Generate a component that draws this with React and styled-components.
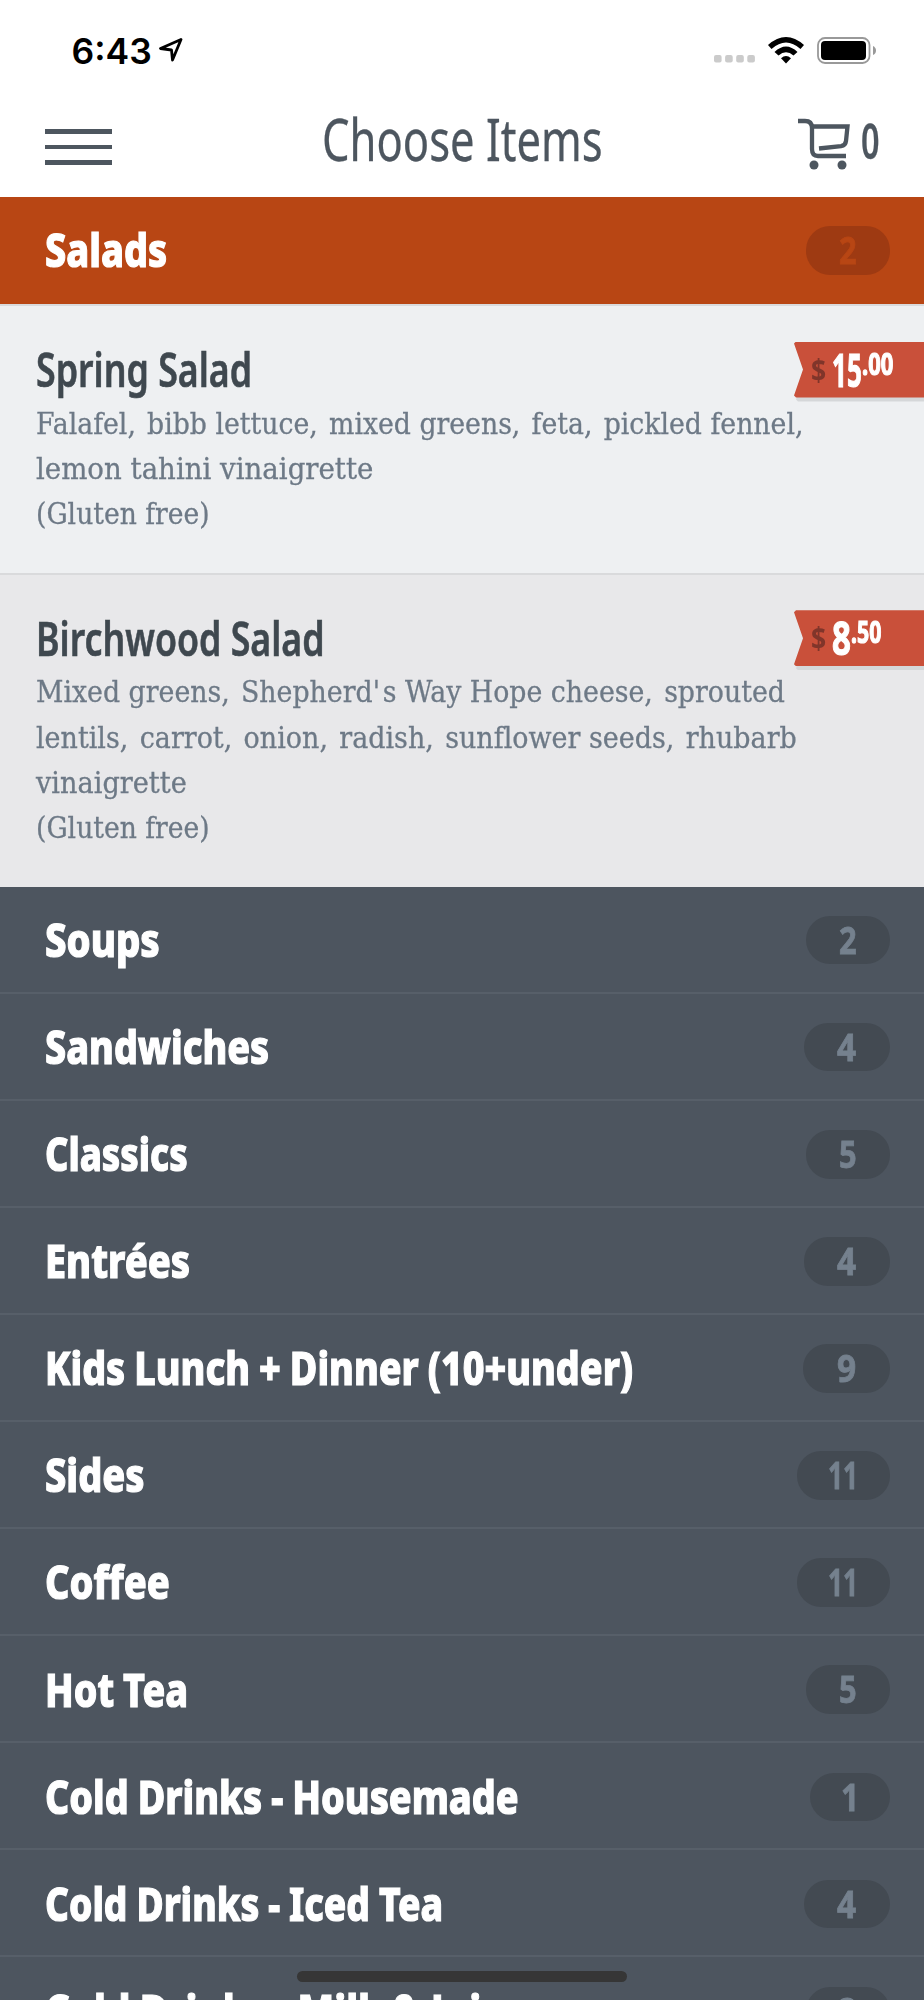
import React, { useLayoutEffect, useRef, useState } from "react";
import styled, { createGlobalStyle } from "styled-components";

const GlobalStyle = createGlobalStyle`
  * { box-sizing: border-box; }
  html, body { margin: 0; padding: 0; }
  body { background: #4d555f; overflow: hidden; }
`;

const sans = `"Noto Sans", "Open Sans", sans-serif`;

const Screen = styled.div`
  position: relative;
  width: 924px;
  height: 2000px;
  overflow: hidden;
  background: #4d555f;
  font-family: ${sans};
  font-variant-ligatures: none;
`;

const FitBox = styled.span`
  display: block;
  flex: none;
  width: ${(p) => p.$width}px;
  white-space: nowrap;
`;

const FitInner = styled.span`
  display: inline-block;
  transform-origin: 0 50%;
`;

/* Condenses a line of type so that it occupies exactly `width` pixels. */
function Fit({ width, children }) {
  const ref = useRef(null);
  const [scale, setScale] = useState(1);
  useLayoutEffect(() => {
    setScale(width / ref.current.offsetWidth);
  }, [width]);
  return (
    <FitBox $width={width}>
      <FitInner ref={ref} style={{ transform: `scaleX(${scale})` }}>
        {children}
      </FitInner>
    </FitBox>
  );
}

const Header = styled.header`
  height: 197px;
  background: #fff;
`;

const StatusBar = styled.div`
  display: flex;
  align-items: center;
  height: 98px;
  padding: 3px 47px 0 71.5px;
`;

const Clock = styled.div`
  padding-top: 2px;
  font: 600 35.5px/40px Inter, sans-serif;
  color: #000;
`;

const StatusIcons = styled.div`
  display: flex;
  align-items: center;
  margin-left: auto;
`;

const NavBar = styled.div`
  display: grid;
  grid-template-columns: 321.5px 1fr 127px;
  height: 99px;
  color: #4d565f;
`;

const MenuButton = styled.button`
  display: flex;
  flex-direction: column;
  justify-content: space-between;
  width: 67px;
  height: 36px;
  margin: 31px 0 0 45px;
  padding: 0;
  border: 0;
  background: none;
`;

const MenuBar = styled.span`
  height: 4.7px;
  background: #4d565f;
`;

const Title = styled.h1`
  margin: 0;
  font-size: 58px;
  font-weight: 400;
  line-height: 81px;
  -webkit-text-stroke: 0.3px currentColor;
`;

const Cart = styled.div`
  display: flex;
  gap: 10px;
  padding-left: 1px;
  font-size: 49px;
  font-weight: 600;
  line-height: 85px;
  -webkit-text-stroke: 0.3px currentColor;
`;

const Category = styled.div`
  display: flex;
  align-items: center;
  justify-content: space-between;
  height: 107.1px;
  padding: 2px 33.7px 0 45px;
  border-bottom: 2px solid ${(p) => (p.$active ? "#b84614" : "#575f69")};
  background: ${(p) => (p.$active ? "#b84614" : "#4d555f")};
  color: #fff;
  font-size: 46.5px;
  font-weight: 800;
  line-height: 59px;
`;

const CategoryName = styled.div`
  padding-bottom: 1.5px;
  word-spacing: -1px;
  -webkit-text-stroke: 1.2px currentColor;
`;

const Count = styled.span`
  display: flex;
  justify-content: flex-end;
  width: ${(p) => p.$width}px;
  height: 48.6px;
  padding-right: ${(p) => p.$inset}px;
  border-radius: 24px;
  background: ${(p) => (p.$active ? "#9e3a12" : "#434a52")};
  color: ${(p) => (p.$active ? "#b84614" : "#75818e")};
  font-size: 37px;
  font-weight: 700;
  line-height: 47px;
  -webkit-text-stroke: 0.8px currentColor;
`;

const Item = styled.article`
  position: relative;
  padding: 38px 37px 35px 36px;
  border-top: 2px solid #d9dadc;
  background: ${(p) => (p.$shade ? "#e8e8ea" : "#eef0f2")};
`;

const ItemName = styled.h2`
  margin: 0 0 7.7px;
  color: #3f484f;
  font-size: 47px;
  font-weight: 600;
  line-height: 50px;
  -webkit-text-stroke: 0.6px currentColor;
`;

const Description = styled.div`
  color: #6d7986;
  font-family: "DejaVu Serif", serif;
  font-size: 29.5px;
  line-height: 45.3px;
  -webkit-text-stroke: 0.3px currentColor;
`;

const Wide = styled.span`
  letter-spacing: 3px;
`;

const PriceTag = styled.div`
  position: absolute;
  top: 35.5px;
  right: 0;
  width: 130px;
  height: 56px;
  filter: drop-shadow(2px 4px 0 #d5d7d9);
`;

const Ribbon = styled.div`
  display: flex;
  height: 56px;
  padding-left: 17px;
  background: #c9503a;
  clip-path: polygon(0 2px, 2px 0, 100% 0, 100% 100%, 2px 100%, 0 54px, 9px 50%);
  color: #fff;
  font-weight: 700;
`;

const Currency = styled.span`
  margin-right: 6px;
  color: #80352a;
  font-size: 30px;
  line-height: 56px;
`;

const Dollars = styled.span`
  font-size: 47px;
  line-height: 55px;
  -webkit-text-stroke: 1.2px currentColor;
`;

const Cents = styled.span`
  font-size: 30px;
  line-height: 43.5px;
  -webkit-text-stroke: 1.2px currentColor;
`;

const HomeIndicator = styled.div`
  position: absolute;
  left: 297px;
  top: 1971px;
  width: 330px;
  height: 11px;
  border-radius: 6px;
  background: #363636;
`;

const items = [
  {
    name: "Spring Salad", width: 216, dollars: "15", dollarsWidth: 30, cents: ".00", centsWidth: 31.5,
    lines: [
      ["Falafel, bibb lettuce, mixed greens, feta, pickled fennel,", 770],
      ["lemon tahini vinaigrette", 337],
      ["(Gluten free)", 174],
    ],
  },
  {
    name: "Birchwood Salad", width: 289, dollars: "8", dollarsWidth: 19, cents: ".50", centsWidth: 30.5,
    lines: [
      ["Mixed greens, Shepherd's Way Hope cheese, sprouted", 749],
      ["lentils, carrot, onion, radish, sunflower seeds, rhubarb", 761],
      ["vinaigrette", 151],
      ["(Gluten free)", 174],
    ],
  },
];

const categories = [
  ["Soups", 114.5, 2, 84.7],
  ["Sandwiches", 224, 4, 86.3],
  ["Classics", 143, 5, 84.7],
  ["Entrées", 145.5, 4, 86.3],
  ["Kids Lunch + Dinner (10+under)", 588, 9, 87],
  ["Sides", 99.5, 11, 93.5],
  ["Coffee", 125, 11, 93.5],
  ["Hot Tea", 143, 5, 84.7],
  ["Cold Drinks - Housemade", 474, 1, 80],
  ["Cold Drinks - Iced Tea", 398, 4, 86.3],
  ["Cold Drinks - Milk & Juice", 480, 3, 84.7],
];

/* Figure width and right inset inside the pill. */
const figures = { 1: [18, 31], 11: [30, 32], 4: [19, 34], 9: [19, 34] };

/* Adds a little air after commas and apostrophes. */
function Spaced({ text }) {
  return text.split(/([,'])/).map((part, i) =>
    part === "," || part === "'" ? <Wide key={i}>{part}</Wide> : part
  );
}

function CategoryRow({ name, width, count, countWidth, active }) {
  const [figureWidth, inset] = figures[count] || [17.5, 34];
  return (
    <Category $active={active}>
      <CategoryName><Fit width={width}>{name}</Fit></CategoryName>
      <Count $active={active} $width={countWidth} $inset={inset}>
        <Fit width={figureWidth}>{count}</Fit>
      </Count>
    </Category>
  );
}

const Location = styled.svg`
  margin: -2px 0 0 7px;
`;
const Signal = styled.svg`
  margin: 16px 13px 0 0;
`;
const Wifi = styled.svg`
  margin-right: 13px;
`;
const CartIcon = styled.svg`
  margin-top: 20px;
`;

export default function App() {
  return (
    <Screen>
      <GlobalStyle />
      <Header>
        <StatusBar>
          <Clock><Fit width={80}>6:43</Fit></Clock>
          <Location width="24" height="24" viewBox="0 0 24 24" fill="none" stroke="#000" strokeWidth="2.8" strokeLinejoin="round">
            <path d="M22 1.5 L1.5 10.5 L12.5 12 L13.5 22 Z" />
          </Location>
          <StatusIcons>
            <Signal width="41" height="8" viewBox="0 0 41 8" fill="#cbcbcb">
              {[0, 11.1, 22.2, 33.3].map((x) => (
                <rect key={x} x={x} y="0" width="7.6" height="7.4" rx="2" />
              ))}
            </Signal>
            <Wifi width="36" height="27" viewBox="0 0 36 27">
              <path d="M0 8 Q18 -8 36 8 L32.5 12 Q18 -1 3.5 12 Z" />
              <path d="M6.5 15 Q18 4 29.5 15 L25.5 18.6 Q18 12 10.5 18.6 Z" />
              <path d="M13 21.3 Q18 16.6 23 21.3 L18 26.4 Z" />
            </Wifi>
            <svg width="60" height="27" viewBox="0 0 60 27">
              <rect x="1" y="1" width="51.5" height="25" rx="7" fill="none" stroke="#999" strokeWidth="1.8" />
              <rect x="4" y="4" width="45" height="19" rx="4" />
              <path d="M56 9 Q59 10.5 59 13.5 Q59 16.5 56 18 Z" fill="#999" />
            </svg>
          </StatusIcons>
        </StatusBar>
        <NavBar>
          <MenuButton aria-label="Menu"><MenuBar /><MenuBar /><MenuBar /></MenuButton>
          <Title><Fit width={281}>Choose Items</Fit></Title>
          <Cart>
            <CartIcon width="53" height="53" viewBox="0 0 53 53" fill="none" stroke="#4d565f" strokeWidth="4.3">
              <path d="M0 3 H7 Q14 3 14 10 V31 Q14 38 20 38 H48" />
              <path d="M14 8.5 H49.5 L48 23 Q47.5 27.5 43 28.2 L21 30.5" />
              <circle cx="16" cy="47" r="4.5" fill="#4d565f" stroke="none" />
              <circle cx="44" cy="47" r="4.5" fill="#4d565f" stroke="none" />
            </CartIcon>
            <Fit width={18.5}>0</Fit>
          </Cart>
        </NavBar>
      </Header>
      <CategoryRow name="Salads" width={122.5} count={2} countWidth={84.7} active />
      {items.map((item, i) => (
        <Item key={item.name} $shade={i % 2 === 1}>
          <ItemName><Fit width={item.width}>{item.name}</Fit></ItemName>
          <Description>
            {item.lines.map(([text, width]) => (
              <Fit key={text} width={width}><Spaced text={text} /></Fit>
            ))}
          </Description>
          <PriceTag>
            <Ribbon>
              <Currency><Fit width={15}>$</Fit></Currency>
              <Dollars><Fit width={item.dollarsWidth}>{item.dollars}</Fit></Dollars>
              <Cents><Fit width={item.centsWidth}>{item.cents}</Fit></Cents>
            </Ribbon>
          </PriceTag>
        </Item>
      ))}
      {categories.map(([name, width, count, countWidth]) => (
        <CategoryRow key={name} name={name} width={width} count={count} countWidth={countWidth} />
      ))}
      <HomeIndicator />
    </Screen>
  );
}
